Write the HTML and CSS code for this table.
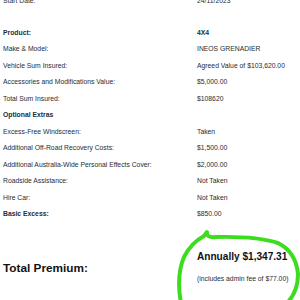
FILE: index.html
```html
<!DOCTYPE html>
<html>
<head>
<meta charset="utf-8">
<link rel="stylesheet" href="styles.css">
</head>
<body>
<div class="page">
  <div class="row"><span>Start Date:</span><span>24/11/2023</span></div>
  <div class="section">
    <div class="row strong"><span>Product:</span><span>4X4</span></div>
    <div class="row"><span>Make &amp; Model:</span><span>INEOS GRENADIER</span></div>
    <div class="row"><span>Vehicle Sum Insured:</span><span>Agreed Value of $103,620.00</span></div>
    <div class="row"><span>Accessories and Modifications Value:</span><span>$5,000.00</span></div>
    <div class="row"><span>Total Sum Insured:</span><span>$108620</span></div>
    <div class="row strong"><span>Optional Extras</span><span></span></div>
    <div class="row"><span>Excess-Free Windscreen:</span><span>Taken</span></div>
    <div class="row"><span>Additional Off-Road Recovery Costs:</span><span>$1,500.00</span></div>
    <div class="row"><span>Additional Australia-Wide Personal Effects Cover:</span><span>$2,000.00</span></div>
    <div class="row"><span>Roadside Assistance:</span><span>Not Taken</span></div>
    <div class="row"><span>Hire Car:</span><span>Not Taken</span></div>
    <div class="row"><span class="b">Basic Excess:</span><span>$850.00</span></div>
  </div>
  <div class="total">
    <div class="total-label">Total Premium:</div>
    <div class="total-value">
      <div class="annual">Annually $1,347.31</div>
      <div class="admin">(includes admin fee of $77.00)</div>
    </div>
  </div>
</div>
<svg class="scribble" width="300" height="300" viewBox="0 0 300 300">
  <path d="M181 303 Q176 276 184 257 Q191 243 204 236 L207 232 Q206 238 216 237 Q256 236 278 243 Q296 252 298 274 Q298 292 287 303" fill="none" stroke="#3cdc1e" stroke-width="4" stroke-linecap="round" stroke-linejoin="round"/>
</svg>
</body>
</html>
```
FILE: styles.css
```css
html, body {
  margin: 0;
  padding: 0;
  background: #ffffff;
  overflow: hidden;
}
body {
  font-family: "Liberation Sans", Arial, sans-serif;
  color: #262c36;
}
.page {
  margin-top: -8.25px;
  padding-left: 3px;
}
.row {
  display: grid;
  grid-template-columns: 194px 1fr;
  height: 16.5px;
  align-items: center;
  font-size: 6.8px;
  white-space: nowrap;
}
.section {
  margin-top: 15.5px;
}
.strong {
  font-weight: bold;
}
.b {
  font-weight: bold;
}
.total {
  display: grid;
  grid-template-columns: 194px 1fr;
  align-items: center;
  margin-top: 28.25px;
  white-space: nowrap;
}
.total-label {
  font-size: 11.8px;
  font-weight: bold;
  color: #111111;
  padding-top: 2px;
}
.total-value {
  display: flex;
  flex-direction: column;
  gap: 9.5px;
}
.annual {
  font-size: 10.1px;
  font-weight: bold;
  line-height: 14px;
  color: #111111;
}
.admin {
  font-size: 6.8px;
  line-height: 10px;
}
.scribble {
  position: absolute;
  left: 0;
  top: 0;
  pointer-events: none;
}
```
